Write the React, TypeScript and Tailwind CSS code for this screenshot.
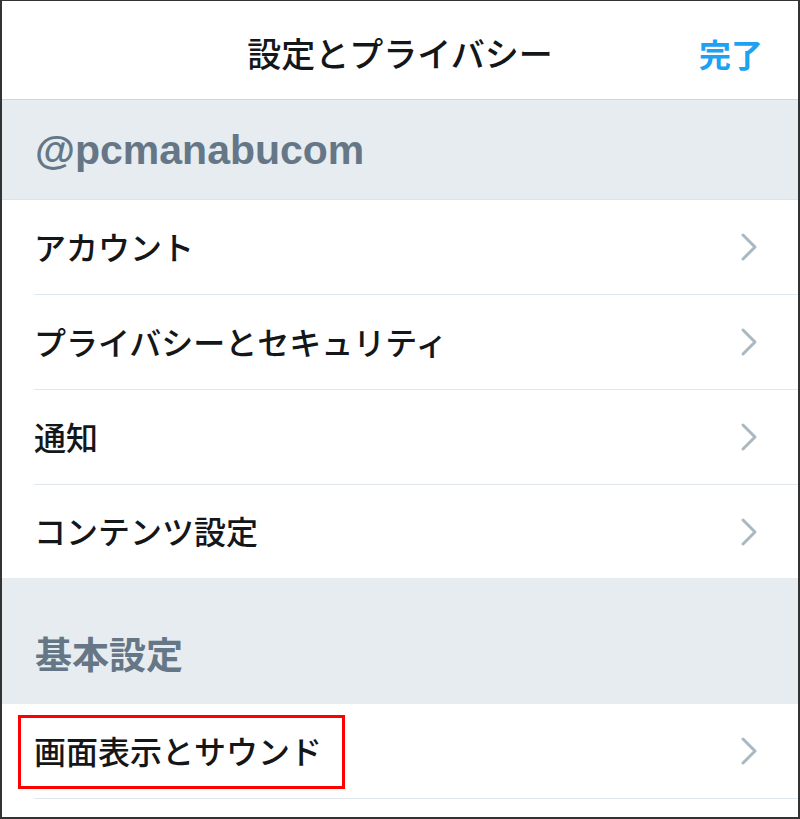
import React from "react";

const jp = { fontFamily: '"Noto Sans CJK JP", "Noto Sans", sans-serif' };

function Chevron() {
  return (
    <svg width="18" height="30" viewBox="0 0 18 30" className="shrink-0">
      <polyline
        points="3,3 15,15 3,27"
        fill="none"
        stroke="#aab8c2"
        strokeWidth="3"
        strokeLinecap="round"
        strokeLinejoin="round"
      />
    </svg>
  );
}

function Row({
  label,
  last = false,
  h = "h-[95px]",
  children,
}: {
  label: string;
  last?: boolean;
  h?: string;
  children?: React.ReactNode;
}) {
  return (
    <div className="relative bg-white pl-[32px]">
      <div
        className={`flex ${h} items-center justify-between pr-[40px] ${last ? "" : "border-b border-[#e1e8ed]"}`}
      >
        <span className="pb-[3px] text-[32px] font-medium leading-none text-[#14171a]" style={jp}>
          {label}
        </span>
        <Chevron />
      </div>
      {children}
    </div>
  );
}

export default function App() {
  return (
    <div className="relative h-[819px] w-[800px] overflow-hidden border-b-2 border-l-2 border-r-2 border-t border-[#333333] bg-white">
      <div className="grid h-[99px] grid-cols-[1fr_auto_1fr] items-center border-b border-[#ccd6dd] bg-white pt-[5px]">
        <div />
        <div className="text-[34px] font-medium leading-none text-[#14171a]" style={jp}>
          設定とプライバシー
        </div>
        <div className="flex justify-end pr-[35px]">
          <span className="text-[32px] font-bold leading-none text-[#1da1f2]" style={jp}>
            完了
          </span>
        </div>
      </div>

      <div className="flex h-[100px] items-center border-b border-[#dde3e8] bg-[#e6ecf0] pl-[33px] pt-[2px]">
        <span
          className="text-[41px] font-bold leading-none text-[#657786]"
          style={{ fontFamily: '"Liberation Sans", Arial, sans-serif' }}
        >
          @pcmanabucom
        </span>
      </div>

      <Row label="アカウント" />
      <Row label="プライバシーとセキュリティ" />
      <Row label="通知" />
      <Row label="コンテンツ設定" last h="h-[93px]" />

      <div className="flex h-[126px] items-center bg-[#e6ecf0] pl-[33px] pt-[24px]">
        <span className="text-[37px] font-bold leading-none text-[#657786]" style={jp}>
          基本設定
        </span>
      </div>

      <Row label="画面表示とサウンド" h="h-[95px]">
        <div className="pointer-events-none absolute left-[16px] top-[11px] h-[74px] w-[327px] border-[3px] border-[#ff0000]" />
      </Row>
    </div>
  );
}
